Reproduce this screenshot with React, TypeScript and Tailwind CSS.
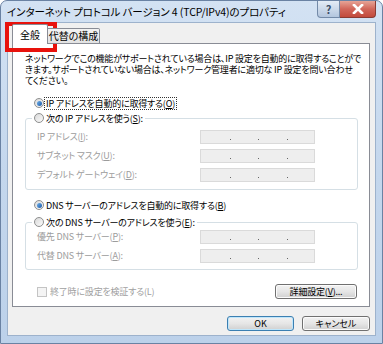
import React from "react";

const F = "font-['Noto_Sans_CJK_JP',sans-serif] [font-feature-settings:'palt']";

function Radio({ checked }: { checked?: boolean }) {
  return (
    <span className="w-[10px] h-[10px] rounded-full border border-[#8e8f8f] bg-linear-to-br from-[#d9d9d9] to-[#fbfbfb] flex items-center justify-center shrink-0">
      {checked && <span className="w-[5px] h-[5px] rounded-full bg-linear-to-br from-[#6fb0e8] to-[#1c5aa8]" />}
    </span>
  );
}

function U({ c }: { c: string }) {
  return <span className="underline underline-offset-[1px]">{c}</span>;
}

function IpBox() {
  return (
    <div className="w-[115px] h-[14px] bg-[#eeeeee] border border-[#dadada] flex items-end pb-[3px] shrink-0">
      <span className="w-[1px] h-[1px] bg-[#666666] ml-[29px]" />
      <span className="w-[1px] h-[1px] bg-[#666666] ml-[27px]" />
      <span className="w-[1px] h-[1px] bg-[#666666] ml-[28px]" />
    </div>
  );
}

function Row({ children }: { children: React.ReactNode }) {
  return (
    <div className="flex items-center h-[14px]">
      <div className="w-[174px] pl-[11px] text-[#9c9c9c] leading-[12px] whitespace-nowrap">{children}</div>
      <IpBox />
    </div>
  );
}

function Btn({ children, w, def }: { children: React.ReactNode; w: string; def?: boolean }) {
  return (
    <div
      className={`${w} h-[15px] rounded-[3px] border ${
        def ? "border-[#3c7fb1] shadow-[inset_0_0_0_1px_#bfe6fb]" : "border-[#707070] shadow-[inset_0_0_0_1px_#fbfbfb]"
      } bg-linear-to-b from-[#f2f2f2] via-[#e6e6e6] to-[#d0d0d0] flex items-center justify-center text-[9px] leading-[12px] text-black whitespace-nowrap`}
    >
      {children}
    </div>
  );
}

export default function App() {
  return (
    <div className={`${F} relative w-[383px] h-[344px] overflow-hidden bg-white`}>
      <div className="w-[383px] h-[344px] rounded-t-[7px] border border-[#6a82a3] bg-linear-to-b from-[#d3e2f3] via-[#c4d7ed] to-[#bcd1ea] flex flex-col">
        {/* title bar */}
        <div className="h-[21px] flex items-start shrink-0">
          <div className="pl-[6px] pt-[4px] text-[10.5px] leading-[13px] tracking-[-0.1px] text-black whitespace-nowrap">
            インターネット プロトコル バージョン 4 (TCP/IPv4)のプロパティ
          </div>
          <div className="ml-auto mr-[6px] flex">
            <div className="w-[23px] h-[17px] rounded-bl-[4px] border border-t-0 border-[#738aa8] bg-linear-to-b from-[#e4ecf6] to-[#b3c6de] flex items-center justify-center text-[11px] leading-[11px] text-[#3c4e68] font-bold">
              ?
            </div>
            <div className="w-[36px] h-[17px] rounded-br-[4px] border border-t-0 border-l-0 border-[#8a3b33] bg-linear-to-b from-[#e6a497] via-[#d1665a] to-[#c24a3c] flex items-center justify-center">
              <svg width="12" height="10" viewBox="0 0 12 10">
                <path d="M2 1 L10 9 M10 1 L2 9" stroke="#ffffff" strokeWidth="2.6" strokeLinecap="square" />
              </svg>
            </div>
          </div>
        </div>
        {/* body */}
        <div className="ml-[6px] w-[369px] h-[314px] border border-[#9db2cc] bg-[#f0f0f0] flex flex-col">
          {/* tabs */}
          <div className="flex items-end mt-[1px] ml-[4px] h-[20px] relative z-10 -mb-px">
            <div className="w-[36px] h-[20px] bg-white border border-b-0 border-[#898c95] rounded-t-[2px] flex items-start justify-center pt-[4px] text-[10px] leading-[12px] text-black whitespace-nowrap">
              全般
            </div>
            <div className="w-[52px] h-[16px] bg-linear-to-b from-[#f3f3f3] to-[#e2e2e2] border border-l-0 border-b-[#898c95] border-[#898c95] rounded-tr-[2px] flex items-center justify-center text-[10px] leading-[12px] text-black whitespace-nowrap">
              代替の構成
            </div>
          </div>
          {/* panel */}
          <div className="ml-[4px] w-[358px] h-[264px] bg-white border border-[#898c95] flex flex-col text-[9px] tracking-[-0.2px] text-black">
            <div className="ml-[12px] mt-[9px] leading-[11px] whitespace-nowrap">
              <div>ネットワークでこの機能がサポートされている場合は、IP 設定を自動的に取得することがで</div>
              <div>きます。サポートされていない場合は、ネットワーク管理者に適切な IP 設定を問い合わせ</div>
              <div>てください。</div>
            </div>
            <div className="ml-[21px] mt-[11px] h-[12px] flex items-center gap-[1px]">
              <Radio checked />
              <span className="leading-[11px] outline-1 outline-dotted outline-[#333] px-[1px] whitespace-nowrap">
                IP アドレスを自動的に取得する(<U c="O" />)
              </span>
            </div>
            <fieldset className="ml-[12px] mt-[3px] w-[333px] border border-[#d5dfe5] rounded-[3px] pb-[7px]">
              <legend className="ml-[6px] px-[2px] h-[12px] flex items-center gap-[2px] bg-white whitespace-nowrap">
                <Radio />
                <span className="leading-[11px]">
                  次の IP アドレスを使う(<U c="S" />):
                </span>
              </legend>
              <div className="mt-[6px] flex flex-col gap-[5px]">
                <Row>
                  IP アドレス(<U c="I" />):
                </Row>
                <Row>
                  サブネット マスク(<U c="U" />):
                </Row>
                <Row>
                  デフォルト ゲートウェイ(<U c="D" />):
                </Row>
              </div>
            </fieldset>
            <div className="ml-[21px] mt-[9px] h-[12px] flex items-center gap-[2px]">
              <Radio checked />
              <span className="leading-[11px] whitespace-nowrap">
                DNS サーバーのアドレスを自動的に取得する(<U c="B" />)
              </span>
            </div>
            <fieldset className="ml-[12px] mt-[5px] w-[333px] border border-[#d5dfe5] rounded-[3px] pb-[6px]">
              <legend className="ml-[6px] px-[2px] h-[12px] flex items-center gap-[2px] bg-white whitespace-nowrap">
                <Radio />
                <span className="leading-[11px]">
                  次の DNS サーバーのアドレスを使う(<U c="E" />):
                </span>
              </legend>
              <div className="mt-[2px] flex flex-col gap-[5px]">
                <Row>
                  優先 DNS サーバー(<U c="P" />):
                </Row>
                <Row>
                  代替 DNS サーバー(<U c="A" />):
                </Row>
              </div>
            </fieldset>
            <div className="mt-[14px] flex items-center justify-between pl-[24px] pr-[12px]">
              <div className="flex items-center gap-[3px]">
                <span className="w-[10px] h-[10px] border border-[#c4c4c4] bg-[#f4f4f4]" />
                <span className="text-[#a0a0a0] leading-[11px] whitespace-nowrap">終了時に設定を検証する(L)</span>
              </div>
              <Btn w="w-[82px]">
                詳細設定(<U c="V" />)...
              </Btn>
            </div>
          </div>
          {/* bottom buttons */}
          <div className="mt-[9px] flex justify-end gap-[8px] pr-[5px]">
            <Btn w="w-[67px]" def>
              OK
            </Btn>
            <Btn w="w-[68px]">キャンセル</Btn>
          </div>
        </div>
      </div>
      {/* red annotation box */}
      <div className="absolute left-[5px] top-[22px] w-[52px] h-[30px] border-[4px] border-[#e8120c]" />
    </div>
  );
}
